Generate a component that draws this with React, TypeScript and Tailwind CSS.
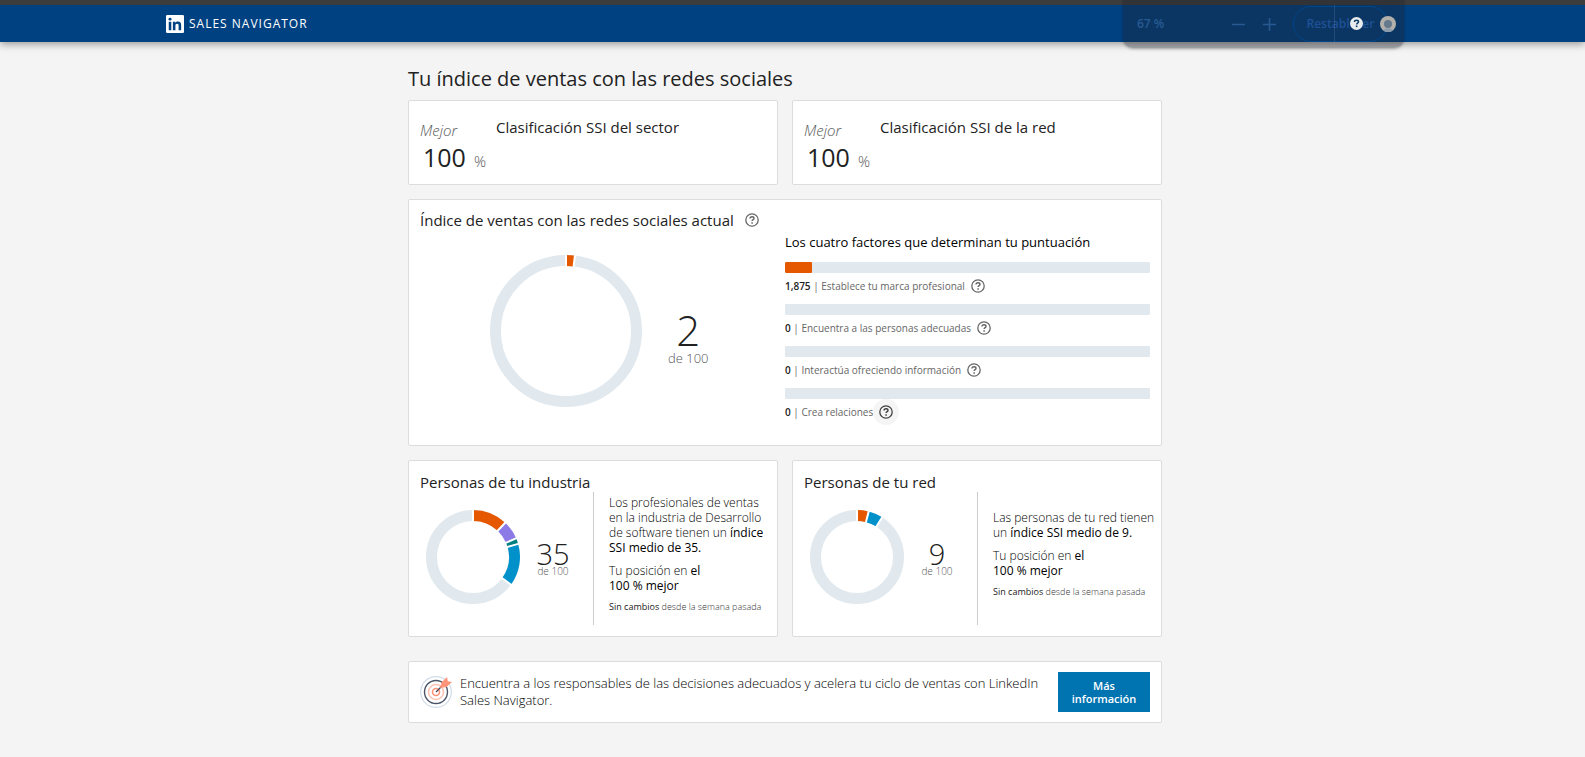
import type { ReactNode } from 'react'

type Segment = {
  value: number
  color: string
}

const ORANGE = '#e65800'
const PURPLE = '#8c7ae6'
const TEAL = '#008080'
const BLUE = '#0091ca'

function polar(c: number, r: number, share: number) {
  const a = share * 2 * Math.PI - Math.PI / 2
  return `${c + r * Math.cos(a)} ${c + r * Math.sin(a)}`
}

function Donut({ size, segments, label }: { size: number; segments: Segment[]; label: string }) {
  const c = size / 2
  const r = c - 11 / 2
  let total = 0
  const arcs = segments.map((s) => {
    const from = total / 100
    total += s.value
    return { ...s, from, to: total / 100 }
  })
  const cuts = [0, ...arcs.map((a) => a.to)]

  return (
    <svg width={size} height={size} viewBox={`0 0 ${size} ${size}`} role="img" aria-label={label}>
      <circle cx={c} cy={c} r={r} fill="none" stroke="#e1e9ee" strokeWidth={11} />
      {arcs.map((a) => (
        <path
          key={a.from}
          d={`M${polar(c, r, a.from)}A${r} ${r} 0 0 1 ${polar(c, r, a.to)}`}
          fill="none"
          stroke={a.color}
          strokeWidth={11}
        />
      ))}
      {cuts.map((cut) => (
        <path
          key={cut}
          d={`M${polar(c, c - 12, cut)}L${polar(c, c + 1, cut)}`}
          stroke="#fff"
          strokeWidth={2}
        />
      ))}
    </svg>
  )
}

function HelpIcon() {
  return (
    <svg width="14" height="14" viewBox="0 0 14 14" fill="none" stroke="currentColor" aria-hidden="true">
      <circle cx="7" cy="7" r="6.2" strokeWidth="1.3" />
      <path d="M5 5.6C5 4.4 5.8 3.7 7 3.7s2 .7 2 1.7c0 1.3-1.9 1.3-1.9 2.7" strokeWidth="1.4" />
      <path d="M7.1 9.2v1.5" strokeWidth="1.5" />
    </svg>
  )
}

function HelpButton({ label, active }: { label: string; active?: boolean }) {
  return (
    <button
      type="button"
      aria-label={label}
      className={`flex size-[26px] shrink-0 items-center justify-center rounded-full ${
        active ? 'bg-[#f5f5f5] text-[#404040]' : 'text-[#666]'
      }`}
    >
      <HelpIcon />
    </button>
  )
}

function Card({ children, className = '' }: { children: ReactNode; className?: string }) {
  return (
    <section className={`rounded-[2px] border border-[#dcdcdc] bg-white ${className}`}>{children}</section>
  )
}

function RankCard({ title }: { title: string }) {
  return (
    <Card className="flex h-[85px] gap-[10px] px-[11px]">
      <div className="pt-[19px] font-light text-[#555]">
        <p className="text-[15px] leading-5 italic">Mejor</p>
        <p className="flex items-baseline gap-2 pl-[3px] text-[15px] leading-[34px]">
          <span className="text-[25px] font-normal text-[#222]">100</span>%
        </p>
      </div>
      <h2 className="pt-4 text-[15px] leading-5 text-[#222]">{title}</h2>
    </Card>
  )
}

const factors = [
  { score: '1,875', name: 'Establece tu marca profesional', share: 7.5 },
  { score: '0', name: 'Encuentra a las personas adecuadas', share: 0 },
  { score: '0', name: 'Interactúa ofreciendo información', share: 0 },
  { score: '0', name: 'Crea relaciones', share: 0, active: true },
]

function Factors() {
  return (
    <div className="w-[365px] pt-8">
      <h3 className="text-[13px] leading-5 font-medium text-black">
        Los cuatro factores que determinan tu puntuación
      </h3>
      <ul className="pt-[10px]">
        {factors.map((f) => (
          <li key={f.name} className="pb-[5px]">
            <div className="h-[11px] overflow-hidden rounded-[1px] bg-[#e1e9ee]">
              <div className="h-full rounded-[1px] bg-[#e65800]" style={{ width: `${f.share}%` }} />
            </div>
            <div className="flex items-center text-[10px] text-[#666]">
              <span>
                <b className="font-semibold text-[#222]">{f.score}</b> | {f.name}
              </span>
              <HelpButton label={`Ayuda: ${f.name}`} active={f.active} />
            </div>
          </li>
        ))}
      </ul>
    </div>
  )
}

type PeopleCardProps = {
  title: string
  score: number
  segments: Segment[]
  children: ReactNode
}

function PeopleCard({ title, score, segments, children }: PeopleCardProps) {
  return (
    <Card className="flex h-[177px] px-[11px] pb-[11px]">
      <div className="w-[173px] shrink-0">
        <h2 className="pt-[11px] text-[15px] leading-5 whitespace-nowrap text-[#222]">{title}</h2>
        <div className="flex gap-[15px] pt-[18px] pl-[6px]">
          <Donut size={94} segments={segments} label={`${title}: ${score} de 100`} />
          <p className="w-9 pt-[30px] text-center font-light whitespace-nowrap">
            <span className="block text-[29px] leading-7 text-[#222]">{score}</span>
            <span className="block text-[10px] leading-[7px] text-[#555]">de 100</span>
          </p>
        </div>
      </div>
      <div className="mt-[31px] flex flex-col justify-center gap-2 border-l border-[#ccc] pb-[10px] pl-[15px] text-[12px] leading-[15px] font-light whitespace-nowrap text-black">
        {children}
        <p>
          Tu posición en <b className="font-medium">el</b>
          <br />
          <b className="font-medium">100 % mejor</b>
        </p>
        <p className="text-[9px] leading-3 text-[#333]">
          <b className="font-medium text-[#222]">Sin cambios</b> desde la semana pasada
        </p>
      </div>
    </Card>
  )
}

function TargetIcon() {
  return (
    <svg width="32" height="32" viewBox="0 0 32 32" fill="none" className="shrink-0" aria-hidden="true">
      <circle cx="16" cy="16" r="15.3" stroke="#d0dcea" strokeWidth="1.2" />
      <circle cx="16" cy="16" r="11.5" stroke="#4a5568" strokeWidth="1.4" />
      <circle cx="16" cy="16" r="7.5" stroke="#ffc4b5" strokeWidth="1.6" />
      <circle cx="16" cy="16" r="3.5" stroke="#ff9478" strokeWidth="1.6" />
      <path d="M16 16l6-6" stroke="#3d4658" strokeWidth="1.3" />
      <path d="M20 12l1.500-5.500L27 1l.8 4.200 4.200.8-5.500 5z" fill="#ff9478" />
    </svg>
  )
}

function Header() {
  return (
    <header className="relative z-10 border-t-5 border-[#3c3c3c] bg-[#004182] shadow-[0_2px_8px_rgba(0,0,0,0.4)]">
      <div className="flex h-[37px] items-center px-[166px]">
        <a href="#" className="flex items-center gap-[5px] text-[12px] tracking-[1px] text-white">
          <svg width="18" height="18" viewBox="0 0 17 17" aria-hidden="true">
            <rect width="17" height="17" rx="1.2" fill="#fff" />
            <path
              d="M2.600 6.400H5v8H2.600zM6.500 6.400h2.300v1.100c.5-.8 1.300-1.300 2.500-1.300 2.300 0 3 1.400 3 3.500v4.700h-2.400v-4.200c0-1.100-.2-2-1.400-2s-1.600.9-1.600 2v4.200H6.500z"
              fill="#004182"
            />
            <circle cx="3.800" cy="3.900" r="1.400" fill="#004182" />
          </svg>
          SALES NAVIGATOR
        </a>
      </div>
    </header>
  )
}

function ZoomBar() {
  return (
    <div className="absolute top-0 right-[181px] z-20 flex h-[48px] w-[281px] items-center rounded-b-[10px] bg-[#1e2430]/36 pl-[14px] text-[12px] font-semibold text-[#285a92] shadow-[0_1px_3px_rgba(0,0,0,0.3)]">
      <span className="w-[95px]">67 %</span>
      <button type="button" aria-label="Alejar" className="flex w-[31px]">
        <svg width="13" height="13" viewBox="0 0 13 13" stroke="currentColor" strokeWidth="1.500" aria-hidden="true">
          <path d="M0 6.500h13" />
        </svg>
      </button>
      <button type="button" aria-label="Acercar" className="flex w-[30px]">
        <svg width="13" height="13" viewBox="0 0 13 13" stroke="currentColor" strokeWidth="1.500" aria-hidden="true">
          <path d="M0 6.500h13M6.500 0v13" />
        </svg>
      </button>
      <button type="button" className="h-9 w-[95px] rounded-full border border-[#00468a] text-[#1f5096]">
        Restablecer
      </button>
    </div>
  )
}

function HeaderActions() {
  return (
    <div className="absolute top-[5px] right-[189px] z-30 flex h-[37px] items-center gap-[17px] border-l border-white/10 pl-[15px]">
      <button type="button" aria-label="Ayuda">
        <svg width="13" height="13" viewBox="0 0 13 13" fill="none" className="block" aria-hidden="true">
          <circle cx="6.500" cy="6.500" r="6.500" fill="#e8ecef" />
          <path d="M4.500 5c0-1.200.8-1.800 2-1.800s2 .6 2 1.600c0 1.300-1.900 1.200-1.900 2.600" stroke="#0a3866" strokeWidth="1.500" />
          <path d="M6.600 8.500v1.600" stroke="#0a3866" strokeWidth="1.600" />
        </svg>
      </button>
      <button type="button" aria-label="Tu perfil">
        <svg width="16" height="16" viewBox="0 0 16 16" className="block" aria-hidden="true">
          <circle cx="8" cy="8" r="8" fill="#b3b0ab" />
          <circle cx="8" cy="8" r="4" fill="#66798c" />
          <path d="M3 14.200c1.500-2.700 8.500-2.700 10 0a8 8 0 0 1-10 0z" fill="#8b9cad" />
        </svg>
      </button>
    </div>
  )
}

export default function App() {
  return (
    <div className="relative min-h-screen bg-[#f4f4f4] font-['Open_Sans','Noto_Sans',sans-serif]">
      <Header />
      <ZoomBar />
      <HeaderActions />
      <main className="pt-[23px] pr-[15px] pb-8">
        <div className="mx-auto max-w-[754px]">
          <h1 className="text-[20px] leading-7 text-[#222]">Tu índice de ventas con las redes sociales</h1>

          <div className="mt-[7px] grid grid-cols-2 gap-[14px]">
            <RankCard title="Clasificación SSI del sector" />
            <RankCard title="Clasificación SSI de la red" />
          </div>

          <Card className="mt-[14px] flex h-[247px] justify-between px-[11px]">
            <div>
              <div className="flex items-center gap-[5px] pt-[7px]">
                <h2 className="text-[15px] leading-5 text-[#222]">Índice de ventas con las redes sociales actual</h2>
                <HelpButton label="Ayuda: índice de ventas" />
              </div>
              <div className="flex gap-[26px] pt-[22px] pl-[70px]">
                <Donut size={152} segments={[{ value: 1.875, color: ORANGE }]} label="2 de 100" />
                <p className="pt-[55px] text-center font-light">
                  <span className="block text-[42px] leading-10 text-[#222]">2</span>
                  <span className="block text-[13px] leading-4 text-[#555]">de 100</span>
                </p>
              </div>
            </div>
            <Factors />
          </Card>

          <div className="mt-[14px] grid grid-cols-2 gap-[14px]">
            <PeopleCard
              title="Personas de tu industria"
              score={35}
              segments={[
                { value: 12, color: ORANGE },
                { value: 6.5, color: PURPLE },
                { value: 2, color: TEAL },
                { value: 14.5, color: BLUE },
              ]}
            >
              <p>
                Los profesionales de ventas
                <br />
                en la industria de Desarrollo
                <br />
                de software tienen un <b className="font-medium">índice</b>
                <br />
                <b className="font-medium">SSI medio de 35.</b>
              </p>
            </PeopleCard>
            <PeopleCard
              title="Personas de tu red"
              score={9}
              segments={[
                { value: 4, color: ORANGE },
                { value: 5, color: BLUE },
              ]}
            >
              <p>
                Las personas de tu red tienen
                <br />
                un <b className="font-medium">índice SSI medio de 9.</b>
              </p>
            </PeopleCard>
          </div>

          <Card className="mt-6 flex items-center px-[11px] py-[10px]">
            <TargetIcon />
            <p className="flex-1 px-2 text-[13px] leading-[17px] font-light text-black">
              Encuentra a los responsables de las decisiones adecuados y acelera tu ciclo de ventas con LinkedIn Sales
              Navigator.
            </p>
            <button
              type="button"
              className="h-10 w-[92px] shrink-0 bg-[#0073b1] px-3 text-[11px] leading-[13px] font-semibold text-white"
            >
              Más información
            </button>
          </Card>
        </div>
      </main>
    </div>
  )
}
